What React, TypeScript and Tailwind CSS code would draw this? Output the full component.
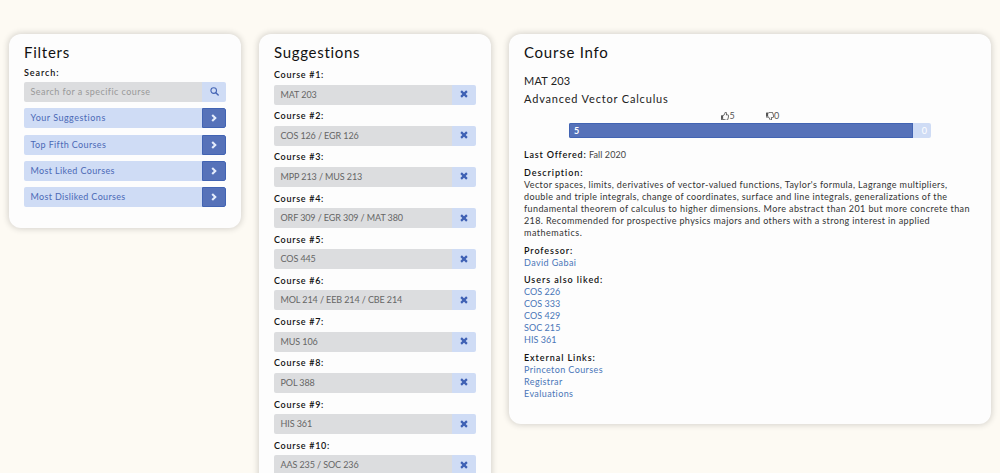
import React from 'react';
import { FaRegThumbsUp, FaRegThumbsDown } from 'react-icons/fa';

const filters = [
  { name: 'Your Suggestions', track: 'tracking-[0.5px]' },
  { name: 'Top Fifth Courses', track: 'tracking-[0.37px]' },
  { name: 'Most Liked Courses', track: 'tracking-[0.36px]' },
  { name: 'Most Disliked Courses', track: 'tracking-[0.33px]' },
];

const courses = [
  'MAT 203',
  'COS 126 / EGR 126',
  'MPP 213 / MUS 213',
  'ORF 309 / EGR 309 / MAT 380',
  'COS 445',
  'MOL 214 / EEB 214 / CBE 214',
  'MUS 106',
  'POL 388',
  'HIS 361',
  'AAS 235 / SOC 236',
];

const description = [
  { text: "Vector spaces, limits, derivatives of vector-valued functions, Taylor's formula, Lagrange multipliers,", track: 'tracking-[0.38px]' },
  { text: 'double and triple integrals, change of coordinates, surface and line integrals, generalizations of the', track: 'tracking-[0.38px]' },
  { text: 'fundamental theorem of calculus to higher dimensions. More abstract than 201 but more concrete than', track: 'tracking-[0.4px]' },
  { text: '218. Recommended for prospective physics majors and others with a strong interest in applied', track: 'tracking-[0.38px]' },
  { text: 'mathematics.', track: 'tracking-[0.5px]' },
];

const card = 'rounded-[12px] bg-[#fdfdfd] px-[15px] pt-[8px] shadow-[0_0_6px_1px_rgba(0,0,0,0.16)]';
const heading = 'h-5 text-[15px] leading-5 text-[#111]';
const label = 'font-semibold text-[9px] leading-3 text-[#111]';

function SearchIcon() {
  return (
    <svg viewBox="0 0 9 9" className="size-[9px]" fill="none" stroke="#4565b5">
      <circle cx="3.7" cy="3.6" r="2.8" strokeWidth="1.1" />
      <path d="M5.8 5.7 8.2 8.1" strokeWidth="1.4" strokeLinecap="round" />
    </svg>
  );
}

function ChevronIcon() {
  return (
    <svg viewBox="0 0 6 8" className="h-2 w-1.5" fill="none" stroke="#e3ebfb" strokeWidth="2.1">
      <path d="M1.2 0.9 4.3 4 1.2 7.1" />
    </svg>
  );
}

function RemoveIcon() {
  return (
    <svg viewBox="0 0 8 8" className="size-2" fill="none" stroke="#3f61b4" strokeWidth="2.2">
      <path d="M1.1 1.1 6.9 6.9M6.9 1.1 1.1 6.9" />
    </svg>
  );
}

function Links({ title, items, track }: { title: string; items: string[]; track: string }) {
  return (
    <section className="mb-[5.7px]">
      <h3 className={`${label} tracking-[0.92px]`}>{title}</h3>
      {items.map((item) => (
        <a key={item} className={`block text-[9px] leading-3 text-[#4a76b8] ${track}`}>{item}</a>
      ))}
    </section>
  );
}

export default function App() {
  return (
    <div className="flex h-[473px] w-[1000px] items-start gap-[18px] overflow-hidden bg-[#fdfaf3] px-[9px] pt-[34px] font-['Lato',sans-serif]">
      <div className={`${card} h-[194px] w-[232px] shrink-0`}>
        <h2 className={`${heading} tracking-[0.75px]`}>Filters</h2>
        <div className={`${label} mt-[5px] tracking-[0.92px]`}>Search:</div>
        <div className="mt-[3px] flex h-5 w-[202px] overflow-hidden rounded-[2px]">
          <div className="flex-1 bg-[#dcdddf] pl-[6.5px] text-[9px] leading-[19px] tracking-[0.45px] text-[#999]">Search for a specific course</div>
          <div className="flex w-[24px] items-center justify-center bg-[#cfdcf5] pb-px"><SearchIcon /></div>
        </div>
        <div className="mt-[6.3px] flex flex-col gap-[6.3px]">
          {filters.map((f) => (
            <div key={f.name} className="flex h-5 w-[202px] overflow-hidden rounded-[2px]">
              <div className={`flex-1 bg-[#cfdcf5] pl-[6.5px] text-[9px] leading-[19px] text-[#4b69b5] ${f.track}`}>{f.name}</div>
              <div className="flex w-[24px] items-center justify-center rounded-r-[2px] border border-[#4264b3] bg-[#5672b9]"><ChevronIcon /></div>
            </div>
          ))}
        </div>
      </div>

      <div className={`${card} h-[520px] w-[232px] shrink-0`}>
        <h2 className={`${heading} tracking-[0.7px]`}>Suggestions</h2>
        <div className="mt-[7px] flex flex-col gap-[6.2px]">
          {courses.map((c, i) => (
            <div key={c} className="h-[35px]">
              <div className={`${label} h-[15.5px] tracking-[0.7px]`}>Course #{i + 1}:</div>
              <div className="flex h-5 w-[202px] overflow-hidden rounded-[2px]">
                <div className="flex-1 bg-[#dcdddf] pl-[6.5px] text-[9px] leading-[19.5px] tracking-[-0.1px] text-[#666]">{c}</div>
                <div className="flex w-[24px] items-center justify-center bg-[#cfdcf5] pb-px"><RemoveIcon /></div>
              </div>
            </div>
          ))}
        </div>
      </div>

      <div className={`${card} h-[390px] w-[482px] shrink-0`}>
        <h2 className={`${heading} tracking-[0.75px]`}>Course Info</h2>
        <div className="mt-[10px] text-[11px] leading-[17.5px] tracking-[0.2px] text-[#222]">
          <div>MAT 203</div>
          <div className="tracking-[0.82px]">Advanced Vector Calculus</div>
        </div>
        <div className="mt-[3px] flex h-[12px] gap-[31px] pl-[197px] text-[9px] leading-3 tracking-[-0.2px] text-[#555]">
          <span className="flex items-center"><FaRegThumbsUp className="size-[8.5px]" />5</span>
          <span className="flex items-center"><FaRegThumbsDown className="size-[8.5px]" />0</span>
        </div>
        <div className="ml-[45px] mt-[0.6px] flex h-[15px] w-[362px] overflow-hidden rounded-[2px] bg-[#cfdcf5] text-[9px] font-bold leading-[13px] text-white">
          <div className="w-[344px] border border-[#4264b3] bg-[#5672b9] pl-1">5</div>
          <div className="flex-1 pr-1 pt-px text-right font-normal">0</div>
        </div>
        <div className="mt-[11.4px] h-[18px] text-[9px] leading-3 text-[#444]">
          <span className={`${label} tracking-[0.8px]`}>Last Offered:</span> <span className="tracking-[0.1px]">Fall 2020</span>
        </div>
        <h3 className={`${label} tracking-[0.92px]`}>Description:</h3>
        <div className="mb-[5.7px] text-[9px] leading-3 text-[#333]">
          {description.map((line) => (
            <div key={line.text} className={`whitespace-nowrap ${line.track}`}>{line.text}</div>
          ))}
        </div>
        <Links title="Professor:" items={['David Gabai']} track="tracking-[0.4px]" />
        <Links title="Users also liked:" items={['COS 226', 'COS 333', 'COS 429', 'SOC 215', 'HIS 361']} track="tracking-[0.05px]" />
        <Links title="External Links:" items={['Princeton Courses', 'Registrar', 'Evaluations']} track="tracking-[0.4px]" />
      </div>
    </div>
  );
}
